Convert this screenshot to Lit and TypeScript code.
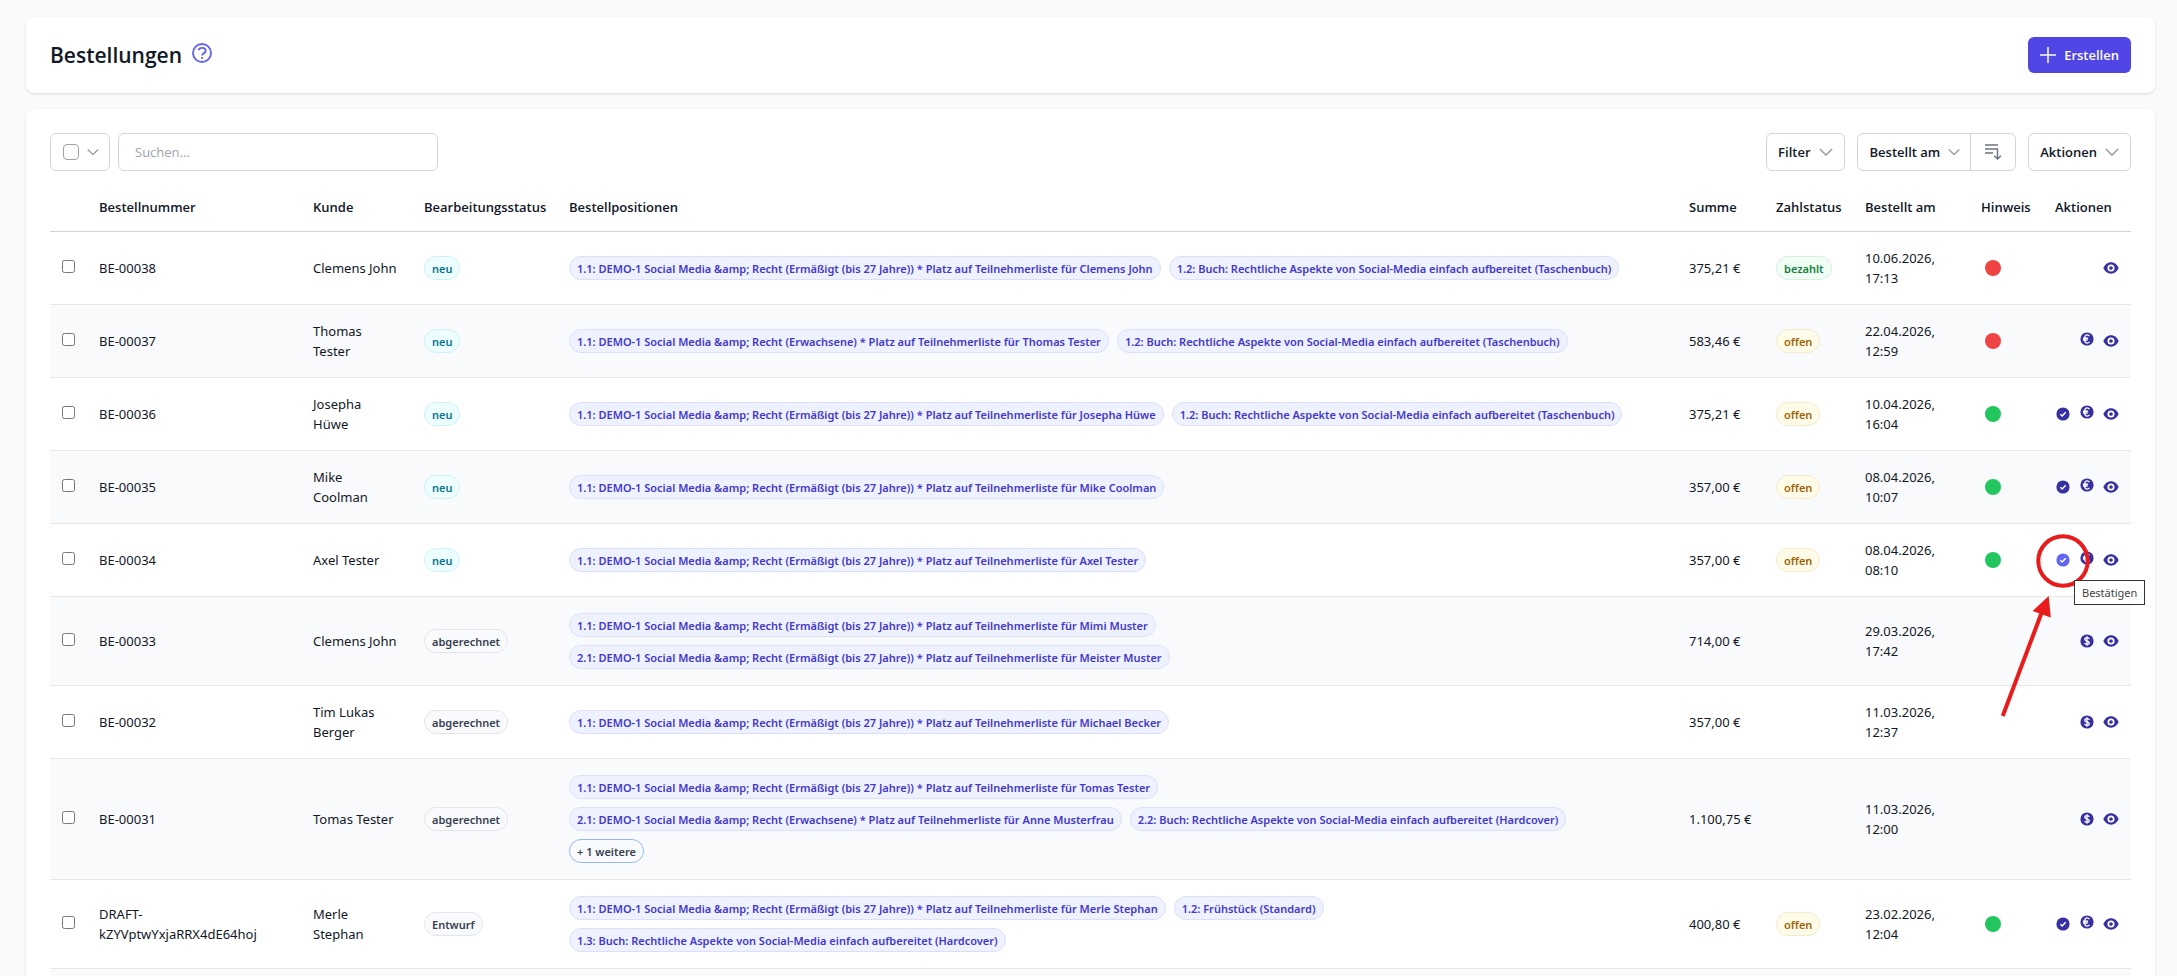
import { LitElement, html, css, svg, nothing } from "lit";
import { customElement } from "lit/decorators.js";
import { classMap } from "lit/directives/class-map.js";

type Action = "confirm" | "euro" | "dollar" | "view";

interface Order {
  id: string;
  customer: string;
  status: "neu" | "abgerechnet" | "Entwurf";
  items: string[];
  more?: string;
  total: string;
  payment?: "bezahlt" | "offen";
  date: string;
  time: string;
  hint?: "red" | "green";
  actions: Action[];
  hovered?: boolean;
}

const reduced = (pos: string, name: string) =>
  `${pos}: DEMO-1 Social Media &amp; Recht (Ermäßigt (bis 27 Jahre)) * Platz auf Teilnehmerliste für ${name}`;
const adult = (pos: string, name: string) =>
  `${pos}: DEMO-1 Social Media &amp; Recht (Erwachsene) * Platz auf Teilnehmerliste für ${name}`;
const book = (pos: string, kind: string) =>
  `${pos}: Buch: Rechtliche Aspekte von Social-Media einfach aufbereitet (${kind})`;

const orders: Order[] = [
  { id: "BE-00038", customer: "Clemens John", status: "neu", items: [reduced("1.1", "Clemens John"), book("1.2", "Taschenbuch")], total: "375,21 €", payment: "bezahlt", date: "10.06.2026,", time: "17:13", hint: "red", actions: ["view"] },
  { id: "BE-00037", customer: "Thomas Tester", status: "neu", items: [adult("1.1", "Thomas Tester"), book("1.2", "Taschenbuch")], total: "583,46 €", payment: "offen", date: "22.04.2026,", time: "12:59", hint: "red", actions: ["euro", "view"] },
  { id: "BE-00036", customer: "Josepha Hüwe", status: "neu", items: [reduced("1.1", "Josepha Hüwe"), book("1.2", "Taschenbuch")], total: "375,21 €", payment: "offen", date: "10.04.2026,", time: "16:04", hint: "green", actions: ["confirm", "euro", "view"] },
  { id: "BE-00035", customer: "Mike Coolman", status: "neu", items: [reduced("1.1", "Mike Coolman")], total: "357,00 €", payment: "offen", date: "08.04.2026,", time: "10:07", hint: "green", actions: ["confirm", "euro", "view"] },
  { id: "BE-00034", customer: "Axel Tester", status: "neu", items: [reduced("1.1", "Axel Tester")], total: "357,00 €", payment: "offen", date: "08.04.2026,", time: "08:10", hint: "green", actions: ["confirm", "euro", "view"], hovered: true },
  { id: "BE-00033", customer: "Clemens John", status: "abgerechnet", items: [reduced("1.1", "Mimi Muster"), reduced("2.1", "Meister Muster")], total: "714,00 €", date: "29.03.2026,", time: "17:42", actions: ["dollar", "view"] },
  { id: "BE-00032", customer: "Tim Lukas Berger", status: "abgerechnet", items: [reduced("1.1", "Michael Becker")], total: "357,00 €", date: "11.03.2026,", time: "12:37", actions: ["dollar", "view"] },
  { id: "BE-00031", customer: "Tomas Tester", status: "abgerechnet", items: [reduced("1.1", "Tomas Tester"), adult("2.1", "Anne Musterfrau"), book("2.2", "Hardcover")], more: "+ 1 weitere", total: "1.100,75 €", date: "11.03.2026,", time: "12:00", actions: ["dollar", "view"] },
  { id: "DRAFT-kZYVptwYxjaRRX4dE64hoj", customer: "Merle Stephan", status: "Entwurf", items: [reduced("1.1", "Merle Stephan"), "1.2: Frühstück (Standard)", book("1.3", "Hardcover")], total: "400,80 €", payment: "offen", date: "23.02.2026,", time: "12:04", hint: "green", actions: ["confirm", "euro", "view"] },
];

const glyphs = {
  confirm: svg`<circle cx="8" cy="8" r="6.6" fill="currentColor"/><path d="M5.4 8.2l1.8 1.8 3.5-3.7" fill="none" stroke="#fff" stroke-width="1.5"/>`,
  euro: svg`<circle cx="8" cy="8" r="6.6" fill="currentColor"/><path d="M10.4 5.2C9.800 4.300 9 3.900 8.200 3.900 6.500 3.900 5.600 5.700 5.600 8s.9 4.100 2.600 4.100c.9 0 1.700-.4 2.300-1.200M3.900 7.200h5.200M3.900 9h4.800" fill="none" stroke="#fff" stroke-width="1.400"/>`,
  dollar: svg`<circle cx="8" cy="8" r="6.600" fill="currentColor"/><path d="M10.300 5.900C10 5.100 9.100 4.700 8 4.700c-1.300 0-2.200.6-2.200 1.600 0 2.300 4.500 1.100 4.500 3.400 0 1-.9 1.600-2.300 1.600-1.200 0-2.100-.5-2.400-1.300M8 3.300v9.400" fill="none" stroke="#fff" stroke-width="1.300"/>`,
  view: svg`<path d="M8 2.300C4.600 2.300 1.700 4.600.4 8c1.300 3.400 4.200 5.700 7.600 5.700s6.300-2.300 7.600-5.700C14.300 4.600 11.400 2.300 8 2.300z" fill="currentColor"/><circle cx="8" cy="8" r="2.700" fill="none" stroke="#fff" stroke-width="1.700"/>`,
};

const actionNames: Record<Action, string> = {
  confirm: "Bestätigen",
  euro: "Bezahlt",
  dollar: "Abrechnung",
  view: "Ansehen",
};

const chevron = (size: number) => html`
  <svg class="chevron" width=${size} height=${size} viewBox="0 0 14 14" aria-hidden="true">
    <path d="M.9 4l6.100 6 6.100-6" fill="none" stroke="currentColor" stroke-width="1.700"/>
  </svg>`;

@customElement("app-root")
export class AppRoot extends LitElement {
  static styles = css`
    :host {
      display: block;
      height: 100vh;
      overflow: hidden;
      background: #f9fafb;
      color: #111827;
      font: 400 13px/20px "Open Sans", "Noto Sans", sans-serif;
    }
    *, *::before, *::after { box-sizing: border-box; }
    button, input { font: inherit; color: inherit; }
    button { cursor: pointer; }
    .page {
      display: flex;
      flex-direction: column;
      gap: 16px;
      height: 100%;
      padding: 17px 22px 0 26px;
      overflow: auto;
      scrollbar-width: none;
    }
    .card {
      flex: none;
      background: #fff;
      border-radius: 8px;
      box-shadow: 0 1px 3px rgb(0 0 0 / 10%), 0 1px 2px -1px rgb(0 0 0 / 10%);
    }
    .head {
      display: flex;
      align-items: center;
      justify-content: space-between;
      padding: 20px 24px;
    }
    .title { display: flex; align-items: center; gap: 10px; }
    h1 { margin: 0; font-size: 21px; line-height: 32px; font-weight: 600; }
    .help {
      display: flex;
      padding: 0 0 4px;
      border: 0;
      background: none;
      color: #6366f1;
    }
    .create {
      display: flex;
      align-items: center;
      gap: 8px;
      height: 36px;
      padding: 0 12px;
      border: 0;
      border-radius: 6px;
      background: #4f46e5;
      color: #fff;
      font-weight: 600;
    }
    .list { padding: 24px; }
    .toolbar { display: flex; align-items: center; gap: 12px; margin-bottom: 12px; }
    .left { display: flex; gap: 8px; margin-right: auto; }
    .box, .search, .drop {
      height: 38px;
      border: 1px solid #d1d5db;
      border-radius: 6px;
      background: #fff;
    }
    .box { display: flex; align-items: center; gap: 8px; padding: 0 10px 0 12px; }
    .box .pick {
      appearance: none;
      width: 16px;
      height: 16px;
      margin: 0;
      border: 1px solid #9ca3af;
      border-radius: 4px;
      background: #fff;
    }
    .open { display: flex; padding: 0; border: 0; background: none; }
    .search { width: 320px; padding: 0 16px; outline: none; }
    .search::placeholder { color: #9ca3af; opacity: 1; }
    .drop {
      display: flex;
      align-items: center;
      gap: 8px;
      padding: 0 11px;
      font-weight: 600;
    }
    .chevron { color: #9ca3af; flex: none; }
    .group { display: flex; }
    .group .drop:first-child { border-radius: 6px 0 0 6px; padding: 0 10px 0 12px; }
    .group .drop:last-child { border-radius: 0 6px 6px 0; border-left: 0; padding: 0 13px; color: #6b7280; }

    table { width: 100%; border-collapse: separate; border-spacing: 0; table-layout: fixed; }
    .c-pick { width: 37px; }
    .c-id { width: 214px; }
    .c-customer { width: 111px; }
    .c-status { width: 145px; }
    .c-total { width: 87px; }
    .c-pay { width: 89px; }
    .c-date { width: 116px; }
    .c-hint { width: 74px; }
    .c-act { width: 88px; }
    th {
      padding: 14px 12px;
      border-bottom: 1px solid #d1d5db;
      text-align: left;
      font-weight: 600;
      white-space: nowrap;
    }
    td {
      padding: 16px 12px;
      border-bottom: 1px solid #e5e7eb;
      vertical-align: middle;
      font-family: "Noto Sans", "Open Sans", sans-serif;
    }
    td:nth-child(3) { padding-right: 14px; }
    th:nth-child(9), td:nth-child(9) { padding-right: 0; }
    tbody tr:nth-child(even) { background: #f9fafb; }
    .two { height: 73px; }
    .mark { display: block; width: 13px; height: 13px; margin: 0 0 3px; }
    .badges { display: flex; flex-wrap: wrap; gap: 8px; }
    .badge, .more {
      display: inline-block;
      height: 24px;
      padding: 0 7px;
      border: 1px solid;
      border-radius: 12px;
      font-size: 11px;
      line-height: 23px;
      font-weight: 600;
      white-space: nowrap;
      vertical-align: middle;
    }
    .item { color: #4338ca; background: #eef2ff; border-color: #dcdffb; }
    .neu { color: #0e7490; background: #ecfeff; border-color: #d0f1f4; }
    .bezahlt { color: #15803d; background: #f0fdf4; border-color: #d8efe0; }
    .offen { color: #a16207; background: #fefce8; border-color: #f2ebcd; }
    .gray { color: #374151; background: #f9fafb; border-color: #e2e5e9; }
    .more { margin-top: 8px; color: #374151; background: #f9fafb; border-color: #93b9f5; }
    .money { white-space: nowrap; }
    .dot { display: block; width: 16px; height: 16px; margin-left: 4px; border-radius: 50%; }
    .red { background: #ef4444; }
    .green { background: #22c55e; }
    .actions { display: flex; justify-content: flex-end; align-items: center; gap: 8px; }
    .action {
      position: relative;
      display: flex;
      padding: 0;
      border: 0;
      background: none;
      color: #3730a3;
    }
    .action.euro { padding-bottom: 4px; }
    .action.active { color: #6366f1; z-index: 1; }
    .note { position: absolute; left: -72px; top: -22px; pointer-events: none; }
    .tip {
      position: absolute;
      left: 19px;
      top: 28px;
      height: 25px;
      padding: 0 7px;
      border: 1px solid #333;
      background: #fff;
      color: #444;
      font-size: 11px;
      line-height: 23px;
      font-weight: 400;
    }
  `;

  private renderAction(action: Action, order: Order) {
    const active = action === "confirm" && !!order.hovered;
    return html`
      <button class=${classMap({ action: true, euro: action === "euro", active })} aria-label=${actionNames[action]}>
        <svg width="16" height="16" viewBox="0 0 16 16" aria-hidden="true">${glyphs[action]}</svg>
        ${active
          ? html`
              <svg class="note" width="110" height="190" viewBox="0 0 110 190" aria-hidden="true">
                <circle cx="80" cy="31" r="24.700" fill="none" stroke="#e81c1c" stroke-width="4"/>
                <path d="M19.700 186L58.500 83" fill="none" stroke="#e81c1c" stroke-width="4"/>
                <path d="M65.700 66L49.600 81l18.200 6.500z" fill="#e81c1c"/>
              </svg>
              <span class="tip" role="tooltip">Bestätigen</span>`
          : nothing}
      </button>`;
  }

  private renderRow(order: Order) {
    const statusClass = order.status === "neu" ? "neu" : "gray";
    return html`
      <tr>
        <td><input class="mark" type="checkbox" aria-label=${order.id} /></td>
        <td>${order.id}</td>
        <td>${order.customer}</td>
        <td><span class="badge ${statusClass}">${order.status}</span></td>
        <td>
          <div class="badges">${order.items.map((item) => html`<span class="badge item">${item}</span>`)}</div>
          ${order.more ? html`<button class="more">${order.more}</button>` : nothing}
        </td>
        <td class="money">${order.total}</td>
        <td>${order.payment ? html`<span class="badge ${order.payment}">${order.payment}</span>` : nothing}</td>
        <td>${order.date}<br />${order.time}</td>
        <td>${order.hint ? html`<span class="dot ${order.hint}"></span>` : nothing}</td>
        <td><div class="actions">${order.actions.map((a) => this.renderAction(a, order))}</div></td>
      </tr>`;
  }

  render() {
    return html`
      <main class="page">
        <header class="card head">
          <div class="title">
            <h1>Bestellungen</h1>
            <button class="help" aria-label="Hilfe">
              <svg width="20" height="20" viewBox="0 0 20 20" fill="none" stroke="currentColor" stroke-width="1.900" aria-hidden="true">
                <circle cx="10" cy="10" r="9"/>
                <path d="M6.300 7.200C6.900 5.700 8.300 4.900 10 4.900c2.100 0 3.700 1.200 3.700 2.900 0 2.400-3.500 2.300-3.500 4.700"/>
                <path d="M10.100 14v1.900"/>
              </svg>
            </button>
          </div>
          <button class="create">
            <svg width="16" height="16" viewBox="0 0 16 16" aria-hidden="true">
              <path d="M8 0v16M0 8h16" stroke="currentColor" stroke-width="1.500"/>
            </svg>
            Erstellen
          </button>
        </header>

        <section class="card list">
          <div class="toolbar">
            <div class="left">
              <div class="box">
                <input class="pick" type="checkbox" aria-label="Alle auswählen" />
                <button class="open" aria-label="Auswahl">${chevron(12)}</button>
              </div>
              <input class="search" type="search" placeholder="Suchen..." aria-label="Suchen" />
            </div>
            <button class="drop">Filter ${chevron(14)}</button>
            <div class="group">
              <button class="drop">Bestellt am ${chevron(12)}</button>
              <button class="drop" aria-label="Sortierung">
                <svg width="18" height="18" viewBox="0 0 18 18" fill="none" stroke="currentColor" stroke-width="1.400" aria-hidden="true">
                  <path d="M1 2h13M1 6h13M1 10h8M13.500 6v10M10.200 12.700l3.300 3.300 3.300-3.300"/>
                </svg>
              </button>
            </div>
            <button class="drop">Aktionen ${chevron(14)}</button>
          </div>

          <table>
            <colgroup>
              <col class="c-pick" /><col class="c-id" /><col class="c-customer" /><col class="c-status" /><col />
              <col class="c-total" /><col class="c-pay" /><col class="c-date" /><col class="c-hint" /><col class="c-act" />
            </colgroup>
            <thead>
              <tr>
                <th></th>
                <th>Bestellnummer</th>
                <th>Kunde</th>
                <th>Bearbeitungsstatus</th>
                <th>Bestellpositionen</th>
                <th>Summe</th>
                <th>Zahlstatus</th>
                <th>Bestellt am</th>
                <th>Hinweis</th>
                <th>Aktionen</th>
              </tr>
            </thead>
            <tbody>
              ${orders.map((order) => this.renderRow(order))}
              <tr><td class="two" colspan="10"></td></tr>
            </tbody>
          </table>
        </section>
      </main>`;
  }
}
